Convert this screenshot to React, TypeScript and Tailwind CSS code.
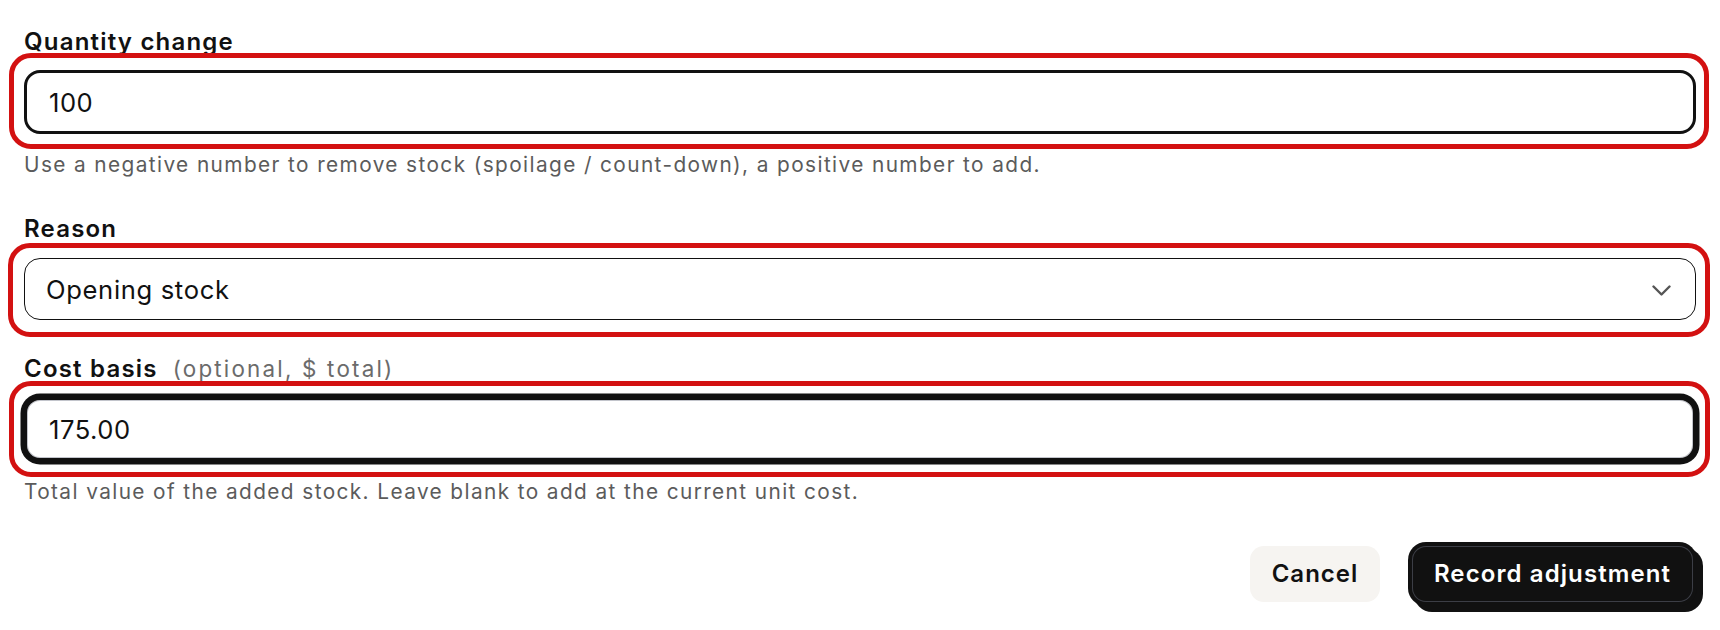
import React from "react";

export default function App() {
  return (
    <div className="w-[1720px] h-[630px] overflow-hidden bg-white px-[24px] pt-[26px] font-['Inter',sans-serif] text-[#111111]">
      {/* Quantity change */}
      <label className="block h-[32px] leading-[32px] text-[24px] font-semibold tracking-[1.2px] whitespace-nowrap">
        Quantity change
      </label>
      <div className="relative mt-[12px]">
        <input
          readOnly
          value="100"
          className="block w-full h-[64px] border-[3px] border-[#111111] rounded-[16px] bg-white px-[22px] text-[25.6px] tracking-[0.5px] text-[#111111] outline-none font-['Inter',sans-serif]"
        />
        <div className="pointer-events-none absolute -top-[17px] -bottom-[15px] -left-[15px] -right-[13px] rounded-[22px] border-[5px] border-[#d31111]" />
      </div>
      <p className="mt-[16px] h-[30px] leading-[30px] text-[20.8px] tracking-[1.4px] text-[#5b5b5b] whitespace-nowrap">
        Use a negative number to remove stock (spoilage / count-down), a positive number to add.
      </p>

      {/* Reason */}
      <label className="mt-[33px] block h-[32px] leading-[32px] text-[24px] font-semibold tracking-[1.2px] whitespace-nowrap">
        Reason
      </label>
      <div className="relative mt-[13px]">
        <div className="flex h-[62px] w-full items-center justify-between rounded-[16px] border-[1.5px] border-[#111111] bg-white pl-[21px] pr-[24px]">
          <span className="pt-[3px] text-[25.6px] tracking-[0.65px] text-[#111111] whitespace-nowrap">Opening stock</span>
          <svg width="19" height="11" viewBox="0 0 19 11" fill="none" className="mt-[3px]">
            <path d="M1.5 1.5 L9.5 9.5 L17.5 1.5" stroke="#555555" strokeWidth="2.4" strokeLinecap="round" strokeLinejoin="round" />
          </svg>
        </div>
        <div className="pointer-events-none absolute -top-[15px] -bottom-[17px] -left-[16px] -right-[14px] rounded-[22px] border-[5px] border-[#d31111]" />
      </div>

      {/* Cost basis */}
      <label className="mt-[33px] flex h-[32px] items-baseline leading-[32px] whitespace-nowrap">
        <span className="text-[24px] font-semibold tracking-[1.2px]">Cost basis</span>
        <span className="ml-[15px] text-[22.4px] tracking-[2.2px] text-[#6b6b6b]">(optional, $ total)</span>
      </label>
      <div className="relative mt-[12px]">
        <input
          readOnly
          value="175.00"
          className="block w-full h-[64px] border-[3px] border-[#111111] rounded-[16px] bg-white px-[22px] text-[25.6px] tracking-[0.5px] text-[#111111] outline-none shadow-[0_0_0_3.5px_#111111,inset_0_0_0_1px_rgba(120,125,140,0.45)] font-['Inter',sans-serif]"
        />
        <div className="pointer-events-none absolute -top-[16px] -bottom-[16px] -left-[15px] -right-[14px] rounded-[22px] border-[5px] border-[#d31111]" />
      </div>
      <p className="mt-[16px] h-[30px] leading-[30px] text-[20.8px] tracking-[1.4px] text-[#5b5b5b] whitespace-nowrap">
        Total value of the added stock. Leave blank to add at the current unit cost.
      </p>

      {/* Buttons */}
      <div className="mt-[39px] flex justify-end gap-[32px] pr-[3px]">
        <button className="flex h-[56px] w-[130px] items-center justify-center rounded-[14px] bg-[#f6f4f1] text-[24px] font-semibold tracking-[1px] text-[#111111]">
          Cancel
        </button>
        <button className="flex h-[56px] w-[281px] items-center justify-center rounded-[14px] bg-[#111111] text-[24px] font-semibold tracking-[1.1px] text-white shadow-[0_0_0_4px_#111111,6px_6px_0_4px_#111111,inset_0_0_0_1px_#3c3e46]">
          Record adjustment
        </button>
      </div>
    </div>
  );
}
